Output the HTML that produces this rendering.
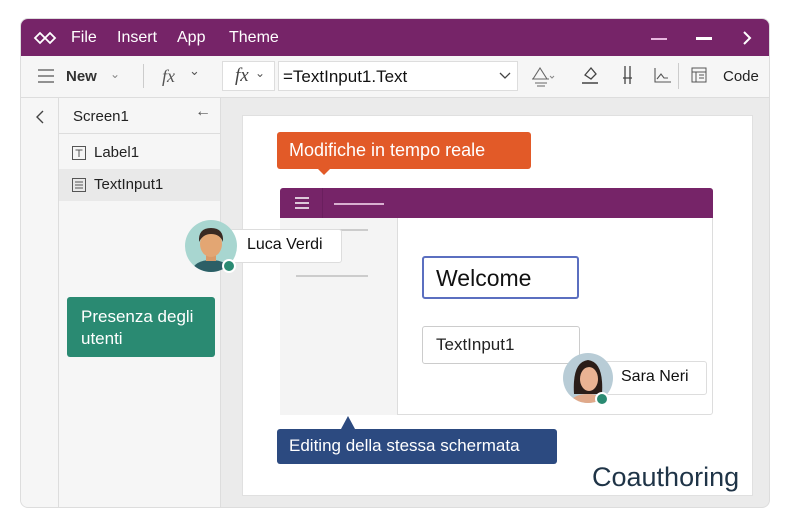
<!DOCTYPE html>
<html><head><meta charset="utf-8"><style>
*{box-sizing:border-box;margin:0;padding:0}
body{width:789px;height:526px;background:#fff;font-family:"Liberation Sans",sans-serif;position:relative;overflow:hidden;color:#222}
.a{position:absolute}
.win{left:20px;top:18px;width:750px;height:490px;border:1px solid #ddd;border-radius:8px;overflow:hidden;background:#ebebeb}
.title{left:0;top:0;width:750px;height:37px;background:#762468;color:#fff;font-size:16px}
.tb{left:0;top:37px;width:750px;height:42px;background:#f6f6f6;border-bottom:1px solid #ddd;font-size:15px}
.t{white-space:nowrap}
</style></head><body>
<div class="a win">
 <div class="a title">
  <svg class="a" style="left:12px;top:11px" width="24" height="16" viewBox="0 0 24 16"><path d="M2 8 L7 3 L12 8 L7 13Z M12 8 L17 3 L22 8 L17 13Z" fill="none" stroke="#fff" stroke-width="1.8"/></svg>
  <span class="a t" style="left:50px;top:10px">File</span>
  <span class="a t" style="left:96px;top:10px">Insert</span>
  <span class="a t" style="left:156px;top:10px">App</span>
  <span class="a t" style="left:208px;top:10px">Theme</span>
  <div class="a" style="left:630px;top:19px;width:16px;height:2px;background:#e8b8e0"></div>
  <div class="a" style="left:675px;top:18px;width:16px;height:3px;background:#fff"></div>
  <svg class="a" style="left:720px;top:11px" width="12" height="16"><path d="M3 2 L9 8 L3 14" fill="none" stroke="#fff" stroke-width="2"/></svg>
 </div>
 <div class="a tb">
  <svg class="a" style="left:17px;top:13px" width="16" height="14"><path d="M0 1H16M0 7H16M0 13H16" stroke="#555" stroke-width="1.3"/></svg>
  <span class="a t" style="left:45px;top:12px;font-weight:bold;color:#333">New</span>
  <span class="a t" style="left:89px;top:11px;color:#888;font-size:12px">&#8964;</span>
  <div class="a" style="left:122px;top:8px;width:1px;height:24px;background:#ccc"></div>
  <span class="a t" style="left:141px;top:10px;font-family:'Liberation Serif';font-style:italic;font-size:18px;color:#555">fx</span>
  <span class="a t" style="left:168px;top:7px;color:#555;font-size:13px">&#8964;</span>
  <div class="a" style="left:201px;top:5px;width:53px;height:30px;background:#fff;border:1px solid #ddd"></div>
  <span class="a t" style="left:214px;top:9px;font-family:'Liberation Serif';font-style:italic;font-size:19px;color:#444">fx</span>
  <span class="a t" style="left:234px;top:10px;color:#555;font-size:12px">&#8964;</span>
  <div class="a" style="left:257px;top:5px;width:240px;height:30px;background:#fff;border:1px solid #ddd"></div>
  <span class="a t" style="left:262px;top:11px;font-size:17px;color:#111">=TextInput1.Text</span>
  <svg class="a" style="left:478px;top:16px" width="12" height="8"><path d="M1 1L6 6L11 1" fill="none" stroke="#444" stroke-width="1.3"/></svg>
  <svg class="a" style="left:510px;top:9px" width="24" height="22"><path d="M2 14L9 3L16 14M1 14H18M4 18H16M6 21H14" fill="none" stroke="#666" stroke-width="1.1"/><path d="M19 11L21 13L23 11" fill="none" stroke="#888"/></svg>
  <svg class="a" style="left:560px;top:9px" width="18" height="20"><path d="M4 10L10 3L15 9L10 14Z" fill="none" stroke="#444" stroke-width="1.3"/><path d="M1 18H17" stroke="#444" stroke-width="1.5"/></svg>
  <svg class="a" style="left:600px;top:9px" width="14" height="20"><path d="M4 1V19M9 1V19M2 13H11" stroke="#444" stroke-width="1.3"/></svg>
  <svg class="a" style="left:633px;top:11px" width="18" height="16"><path d="M1 1V15H17M3 12L7 7L10 11H14" fill="none" stroke="#555" stroke-width="1.1"/></svg>
  <div class="a" style="left:657px;top:7px;width:1px;height:26px;background:#ccc"></div>
  <svg class="a" style="left:670px;top:11px" width="16" height="16"><rect x="1" y="1" width="14" height="14" fill="none" stroke="#555"/><path d="M1 5H15M5 5V15M8 8H13M8 11H13" stroke="#555"/></svg>
  <span class="a t" style="left:702px;top:12px;color:#222">Code</span>
 </div>
 <div class="a" style="left:0;top:79px;width:38px;height:411px;background:#f6f6f6;border-right:1px solid #ddd"></div>
 <svg class="a" style="left:14px;top:90px" width="10" height="16"><path d="M8 2L2 8L8 14" fill="none" stroke="#444" stroke-width="1.4"/></svg>
 <div class="a" style="left:38px;top:79px;width:162px;height:411px;background:#f6f6f6;border-right:1px solid #ddd"></div>
 <div class="a" style="left:38px;top:79px;width:162px;height:36px;border-bottom:1px solid #ddd"></div>
 <span class="a t" style="left:52px;top:89px;font-size:15px;color:#222">Screen1</span>
 <span class="a t" style="left:174px;top:84px;font-size:16px;color:#555">&#8592;</span>
 <svg class="a" style="left:51px;top:127px" width="14" height="14"><rect x="0.5" y="0.5" width="13" height="13" fill="none" stroke="#555"/><path d="M3.5 4H10.5M7 4V11" stroke="#555"/></svg>
 <span class="a t" style="left:73px;top:125px;font-size:15px;color:#222">Label1</span>
 <div class="a" style="left:38px;top:150px;width:161px;height:32px;background:#e9e9e9"></div>
 <svg class="a" style="left:51px;top:159px" width="14" height="14"><rect x="0.5" y="0.5" width="13" height="13" fill="none" stroke="#555"/><path d="M3 4H11M3 7H11M3 10H11" stroke="#555"/></svg>
 <span class="a t" style="left:73px;top:157px;font-size:15px;color:#222">TextInput1</span>
 <div class="a" style="left:221px;top:96px;width:511px;height:381px;background:#fff;border:1px solid #e0e0e0"></div>
</div>

<!-- app mock -->
<div class="a" style="left:280px;top:188px;width:433px;height:227px;background:#fff;border:1px solid #ddd;border-radius:3px"></div>
<div class="a" style="left:280px;top:218px;width:118px;height:197px;background:#f4f4f4;border-right:1px solid #ddd"></div>
<div class="a" style="left:280px;top:188px;width:433px;height:30px;background:#762468;border-radius:3px 3px 0 0"></div>
<div class="a" style="left:322px;top:188px;width:1px;height:30px;background:#6a1f5e"></div>
<svg class="a" style="left:295px;top:197px" width="14" height="12"><path d="M0 1H14M0 6H14M0 11H14" stroke="#fff" stroke-width="1.5"/></svg>
<div class="a" style="left:334px;top:203px;width:50px;height:2px;background:#d8b0d0"></div>
<div class="a" style="left:296px;top:229px;width:72px;height:2px;background:#ccc"></div>
<div class="a" style="left:296px;top:275px;width:72px;height:2px;background:#ccc"></div>
<div class="a" style="left:422px;top:256px;width:157px;height:43px;border:2px solid #5b6fc0;border-radius:3px"></div>
<span class="a t" style="left:436px;top:265px;font-size:23px;color:#111">Welcome</span>
<div class="a" style="left:422px;top:326px;width:158px;height:38px;border:1px solid #ccc;border-radius:3px"></div>
<span class="a t" style="left:436px;top:335px;font-size:17px;color:#222">TextInput1</span>

<!-- orange callout -->
<div class="a" style="left:277px;top:132px;width:254px;height:37px;background:#e25a28;border-radius:3px"></div>
<div class="a" style="left:317px;top:168px;width:0;height:0;border-left:7px solid transparent;border-right:7px solid transparent;border-top:7px solid #e25a28"></div>
<span class="a t" style="left:289px;top:140px;font-size:18px;color:#fff">Modifiche in tempo reale</span>

<!-- green -->
<div class="a" style="left:67px;top:297px;width:148px;height:60px;background:#2a8a72;border-radius:3px"></div>
<span class="a" style="left:81px;top:306px;font-size:17px;color:#fff;line-height:22px">Presenza degli<br>utenti</span>

<!-- blue -->
<div class="a" style="left:277px;top:429px;width:280px;height:35px;background:#2c4a80;border-radius:3px"></div>
<div class="a" style="left:341px;top:416px;width:0;height:0;border-left:7px solid transparent;border-right:7px solid transparent;border-bottom:13px solid #2c4a80"></div>
<span class="a t" style="left:289px;top:436px;font-size:17px;color:#fff">Editing della stessa schermata</span>

<span class="a t" style="left:592px;top:462px;font-size:27px;color:#1f3447">Coauthoring</span>

<!-- Luca -->
<div class="a" style="left:230px;top:229px;width:112px;height:34px;background:#fff;border:1px solid #ddd;border-radius:3px"></div>
<span class="a t" style="left:247px;top:236px;font-size:16px;color:#111">Luca Verdi</span>
<svg class="a" style="left:184px;top:220px" width="56" height="56" viewBox="0 0 56 56">
 <circle cx="27" cy="26" r="26" fill="#a8d6d0"/>
 <clipPath id="c1"><circle cx="27" cy="26" r="26"/></clipPath>
 <g clip-path="url(#c1)"><path d="M6 56Q8 40 27 40Q46 40 48 56Z" fill="#2c5f66"/><rect x="22" y="33" width="10" height="8" fill="#d99a68"/><ellipse cx="27" cy="24" rx="11" ry="13" fill="#e3a673"/><path d="M15 22Q14 8 27 8Q40 8 39 22Q36 14 27 14Q19 14 15 22Z" fill="#3a2a22"/></g>
 <circle cx="45" cy="46" r="6" fill="#2a8a72" stroke="#fff" stroke-width="2"/>
</svg>

<!-- Sara -->
<div class="a" style="left:600px;top:361px;width:107px;height:34px;background:#fff;border:1px solid #ddd;border-radius:3px"></div>
<span class="a t" style="left:621px;top:368px;font-size:16px;color:#111">Sara Neri</span>
<svg class="a" style="left:562px;top:352px" width="56" height="56" viewBox="0 0 56 56">
 <circle cx="26" cy="26" r="25" fill="#b8ccd6"/>
 <clipPath id="c2"><circle cx="26" cy="26" r="25"/></clipPath>
 <g clip-path="url(#c2)"><path d="M12 42Q10 10 26 8Q42 10 40 42Z" fill="#2a1d18"/><path d="M6 56Q8 42 26 42Q44 42 46 56Z" fill="#e0a98a"/><ellipse cx="27" cy="27" rx="9" ry="12" fill="#eab393"/><path d="M17 24Q20 12 34 16Q30 12 22 14Z" fill="#2a1d18"/></g>
 <circle cx="40" cy="47" r="6" fill="#2a8a72" stroke="#fff" stroke-width="2"/>
</svg>
</body></html>
